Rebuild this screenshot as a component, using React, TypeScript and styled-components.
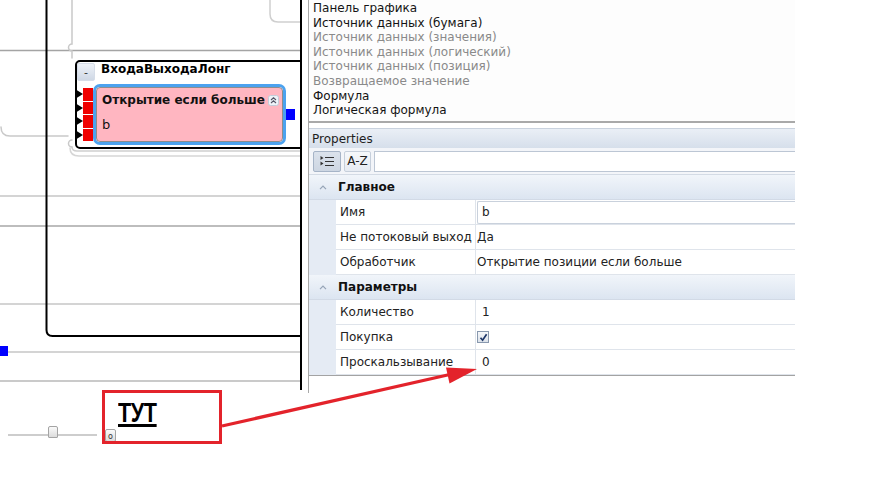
import React from "react";
import styled, { createGlobalStyle } from "styled-components";

const Global = createGlobalStyle`
  html, body { margin: 0; padding: 0; background: #fff; }
  body { font-family: "DejaVu Sans", Verdana, sans-serif; }
  * { box-sizing: border-box; }
`;

const Page = styled.div`
  position: relative;
  width: 872px;
  height: 496px;
  overflow: hidden;
  background: #fff;
  display: flex;
  flex-direction: column;
`;

const Workspace = styled.div`
  display: flex;
  height: 393px;
  flex: none;
`;

const Canvas = styled.div`
  position: relative;
  width: 302px;
  height: 390px;
  flex: none;
  border-right: 2px solid #000;
  overflow: hidden;
`;

const Wires = styled.svg`
  position: absolute;
  left: 0;
  top: 0;
`;

const Splitter = styled.div`
  width: 6px;
  flex: none;
`;

const Side = styled.div`
  width: 487px;
  flex: none;
  border-left: 1px solid #a9a9a9;
  display: flex;
  flex-direction: column;
`;

const ListBox = styled.div`
  height: 123px;
  flex: none;
  border-bottom: 2px solid #a9a9a9;
  padding: 1px 0 0 4px;
  background: #fdfdfd;
`;

const ListItem = styled.div<{ $muted?: boolean }>`
  font-size: 12px;
  line-height: 14.6px;
  white-space: nowrap;
  color: ${(p) => (p.$muted ? "#8a8a8a" : "#141414")};
`;

const Spacer = styled.div`
  height: 5px;
  flex: none;
`;

const PropsPanel = styled.div`
  display: flex;
  flex-direction: column;
  border-bottom: 1px solid #a3a3a3;
`;

const PanelHeader = styled.div`
  height: 20px;
  display: flex;
  align-items: center;
  padding-left: 3px;
  font-size: 12px;
  color: #1e1e1e;
  background: linear-gradient(#eaeff6, #d6dfeb);
  border-top: 1px solid #c9d2de;
`;

const Toolbar = styled.div`
  height: 27px;
  display: flex;
  align-items: center;
  gap: 3px;
  padding: 0 0 0 4px;
  background: #f3f5f9;
  border-bottom: 1px solid #d4dbe5;
`;

const ToolButton = styled.div<{ $pressed?: boolean }>`
  height: 21px;
  width: ${(p) => (p.$pressed ? "28px" : "27px")};
  display: flex;
  align-items: center;
  justify-content: center;
  font-size: 12px;
  color: #222;
  border: 1px solid ${(p) => (p.$pressed ? "#a6b4c7" : "#c6cfdb")};
  border-radius: 2px;
  background: ${(p) =>
    p.$pressed ? "linear-gradient(#dbe2ec, #cdd6e2)" : "linear-gradient(#f6f8fb, #e6ebf2)"};
`;

const SearchBox = styled.div`
  flex: 1;
  height: 21px;
  background: #fff;
  border: 1px solid #bcc6d4;
  border-right: none;
`;

const Grid = styled.div`
  display: flex;
  flex-direction: column;
`;

const CatRow = styled.div`
  height: 25px;
  display: flex;
  align-items: center;
  background: linear-gradient(#f1f5fa, #dce5f1);
  border-bottom: 1px solid #d2dae6;
  font-size: 12px;
  font-weight: bold;
  color: #111;
`;

const CatToggle = styled.div`
  width: 27px;
  display: flex;
  justify-content: center;
  align-items: center;
`;

const CatTitle = styled.span`
  padding-left: 2px;
`;

const PropRow = styled.div`
  height: 25px;
  display: flex;
`;

const Gutter = styled.div`
  width: 27px;
  flex: none;
  background: #e5ebf4;
`;

const NameCell = styled.div`
  width: 140px;
  flex: none;
  display: flex;
  align-items: center;
  padding-left: 4px;
  font-size: 12px;
  color: #222;
  white-space: nowrap;
  border-right: 1px solid #dfe4eb;
  border-bottom: 1px solid #dfe4eb;
`;

const ValueCell = styled.div<{ $pad: number }>`
  flex: 1;
  display: flex;
  align-items: center;
  padding-left: ${(p) => p.$pad}px;
  font-size: 12px;
  color: #222;
  white-space: nowrap;
  border-bottom: 1px solid #dfe4eb;
`;

const TextEditor = styled.div`
  flex: 1;
  height: 23px;
  display: flex;
  align-items: center;
  padding-left: 4px;
  background: #fff;
  border: 1px solid #c9d1dc;
  border-right: none;
  border-radius: 2px 0 0 2px;
`;

const CheckBox = styled.div`
  width: 12px;
  height: 12px;
  border: 1px solid #8898ae;
  background: linear-gradient(#f5f7fa, #dce2ea);
  display: flex;
  align-items: center;
  justify-content: center;
`;

/* ---------- diagram nodes ---------- */

const GroupNode = styled.div`
  position: absolute;
  left: 75px;
  top: 60px;
  width: 250px;
  height: 89px;
  border: 2px solid #000;
  border-radius: 5px;
  background: #fff;
  display: flex;
  flex-direction: column;
`;

const GroupHeader = styled.div`
  height: 22px;
  display: flex;
  align-items: flex-start;
  gap: 6px;
`;

const MinusButton = styled.div`
  width: 18px;
  height: 18px;
  margin-top: 1px;
  display: flex;
  align-items: center;
  justify-content: center;
  font-size: 11px;
  color: #333;
  background: linear-gradient(#eef2f8, #cfd8e5);
  border: 1px solid #d6dde8;
  border-radius: 2px;
`;

const GroupTitle = styled.span`
  font-size: 12px;
  font-weight: bold;
  color: #000;
  line-height: 14px;
  white-space: nowrap;
`;

const GroupBody = styled.div`
  display: flex;
  align-items: flex-start;
`;

const PinColumn = styled.div`
  margin-left: -2px;
  margin-top: 4px;
  display: flex;
  flex-direction: column;
  gap: 1px;
`;

const InPin = styled.div`
  display: flex;
  align-items: center;
  height: 12.5px;
`;

const PinArrow = styled.div`
  width: 0;
  height: 0;
  border-top: 5.5px solid transparent;
  border-bottom: 5.5px solid transparent;
  border-left: 8px solid #000;
`;

const PinSquare = styled.div`
  width: 10px;
  height: 12.5px;
  background: #f00000;
`;

const Block = styled.div`
  width: 193px;
  height: 61px;
  border: 3px solid #4ca2ef;
  border-radius: 7px;
  flex: none;
  display: flex;
`;

const BlockInner = styled.div`
  flex: 1;
  border: 1.5px solid #8d8d8d;
  border-radius: 4px;
  background: #ffb6c1;
  display: flex;
  flex-direction: column;
  padding: 4px 0 0 5px;
`;

const BlockTitleRow = styled.div`
  display: flex;
  align-items: center;
  gap: 3px;
  height: 16px;
`;

const BlockTitle = styled.span`
  font-size: 12px;
  font-weight: bold;
  color: #111;
  white-space: nowrap;
`;

const BlockValue = styled.span`
  margin-top: 9px;
  font-size: 13px;
  color: #111;
`;

const OutPin = styled.div`
  width: 9px;
  height: 11px;
  margin-top: 25px;
  background: #0000ff;
  flex: none;
`;

/* ---------- bottom bar ---------- */

const BottomBar = styled.div`
  display: flex;
  align-items: center;
  padding: 35px 0 0 8px;
  gap: 8px;
`;

const Slider = styled.div`
  position: relative;
  width: 89px;
  height: 12px;
  display: flex;
  align-items: center;
`;

const SliderTrack = styled.div`
  width: 100%;
  height: 2px;
  background: #cdcdcd;
`;

const SliderThumb = styled.div`
  position: absolute;
  left: 40px;
  top: -3px;
  width: 10px;
  height: 12px;
  border: 1px solid #a4a4a4;
  border-radius: 2px 2px 1px 1px;
  background: linear-gradient(#fafafa, #dcdcdc);
`;

const ZoomButton = styled.div`
  width: 11px;
  height: 13px;
  border: 1px solid #a4a4a4;
  border-radius: 2px;
  background: linear-gradient(#fafafa, #dcdcdc);
  font-size: 8px;
  line-height: 14px;
  text-align: center;
  color: #333;
  margin-top: 1px;
`;

/* ---------- annotation ---------- */

const Callout = styled.div`
  position: absolute;
  left: 102px;
  top: 390px;
  width: 120px;
  height: 54px;
  border: 3px solid #e3232b;
  padding: 5px 0 0 13px;
`;

const CalloutText = styled.span`
  display: inline-block;
  font-family: "Liberation Sans", Arial, sans-serif;
  font-weight: bold;
  font-size: 27px;
  line-height: 30px;
  color: #000;
  text-decoration: underline;
  text-decoration-thickness: 3px;
  text-underline-offset: 2px;
  transform: scaleX(0.8);
  transform-origin: left center;
  letter-spacing: -0.5px;
`;

const Overlay = styled.svg`
  position: absolute;
  left: 0;
  top: 0;
  pointer-events: none;
`;

const listItems: { text: string; muted?: boolean }[] = [
  { text: "Панель графика" },
  { text: "Источник данных (бумага)" },
  { text: "Источник данных (значения)", muted: true },
  { text: "Источник данных (логический)", muted: true },
  { text: "Источник данных (позиция)", muted: true },
  { text: "Возвращаемое значение", muted: true },
  { text: "Формула" },
  { text: "Логическая формула" },
];

type Row = { name: string; value?: string; kind?: "text" | "num" | "check" };
const sections: { title: string; rows: Row[] }[] = [
  {
    title: "Главное",
    rows: [
      { name: "Имя", value: "b", kind: "text" },
      { name: "Не потоковый выход", value: "Да" },
      { name: "Обработчик", value: "Открытие позиции если больше" },
    ],
  },
  {
    title: "Параметры",
    rows: [
      { name: "Количество", value: "1", kind: "num" },
      { name: "Покупка", kind: "check" },
      { name: "Проскальзывание", value: "0", kind: "num" },
    ],
  },
];

const Chevron = () => (
  <svg width="8" height="5" viewBox="0 0 8 5">
    <path d="M1 4.2 L4 1.2 L7 4.2" fill="none" stroke="#95a3b6" strokeWidth="1.2" />
  </svg>
);

const CategorizedIcon = () => (
  <svg width="15" height="11" viewBox="0 0 15 11">
    <path d="M0.5 0 L3.5 2 L0.5 4 Z" fill="#333" />
    <path d="M0.5 5.5 L3.5 7.5 L0.5 9.5 Z" fill="#333" />
    <path d="M5 1.5 H14 M5 5.5 H14 M5 9.5 H14" stroke="#333" strokeWidth="1.2" />
  </svg>
);

const CollapseIcon = () => (
  <svg width="11" height="11" viewBox="0 0 11 11">
    <rect x="0.5" y="0.5" width="10" height="10" rx="2" fill="#eef2f8" stroke="#c3ccd9" />
    <path d="M3 5 L5.5 2.8 L8 5 M3 8 L5.5 5.8 L8 8" fill="none" stroke="#556" strokeWidth="1.1" />
  </svg>
);

const CheckMark = () => (
  <svg width="9" height="9" viewBox="0 0 9 9">
    <path d="M1.5 4.8 L3.6 7.2 L7.6 1.2" fill="none" stroke="#1c3568" strokeWidth="1.7" />
  </svg>
);

function renderValue(r: Row) {
  if (r.kind === "text")
    return (
      <ValueCell $pad={1}>
        <TextEditor>{r.value}</TextEditor>
      </ValueCell>
    );
  if (r.kind === "check")
    return (
      <ValueCell $pad={1}>
        <CheckBox>
          <CheckMark />
        </CheckBox>
      </ValueCell>
    );
  if (r.kind === "num") return <ValueCell $pad={6}>{r.value}</ValueCell>;
  return <ValueCell $pad={1}>{r.value}</ValueCell>;
}

export default function App() {
  return (
    <Page>
      <Global />
      <Workspace>
        <Canvas>
          <Wires width="300" height="390" viewBox="0 0 300 390">
            <g fill="none" strokeLinecap="round">
              <path d="M0 50.5 H300" stroke="#a4a4a4" strokeWidth="1.5" />
              <path d="M72 0 V44 a3.5 3.5 0 0 0 0 7 V58" stroke="#c9c9c9" strokeWidth="1.5" />
              <path d="M270 0 V14 Q270 22 278 22 H300" stroke="#cfcfcf" strokeWidth="1.5" />
              <path d="M1 127 Q1 136 10 136 H68" stroke="#c9c9c9" strokeWidth="1.5" />
              <path d="M72 140 a3.5 3.5 0 0 0 0 7" stroke="#c9c9c9" strokeWidth="1.5" />
              <path d="M72 147 Q72 151 77 151 H300" stroke="#cfcfcf" strokeWidth="1.5" />
              <path d="M70 148 Q70 156 79 156 H300" stroke="#d6d6d6" strokeWidth="1.5" />
              <path d="M296 115 H300" stroke="#bcbcbc" strokeWidth="1.5" />
              <path d="M0 196 H300" stroke="#c6c6c6" strokeWidth="1.5" />
              <path d="M0 226 H300" stroke="#bdbdbd" strokeWidth="2" />
              <path d="M0 304 H300" stroke="#c6c6c6" strokeWidth="1.5" />
              <path d="M8 352 H300" stroke="#d4d4d4" strokeWidth="2" />
              <path d="M0 381 H300" stroke="#b8b8b8" strokeWidth="1.5" />
              <path d="M46.5 0 V330 Q46.5 336 52.5 336 H300" stroke="#000" strokeWidth="2" />
            </g>
            <rect x="0" y="346" width="8" height="10" fill="#0000ff" />
          </Wires>

          <GroupNode>
            <GroupHeader>
              <MinusButton>-</MinusButton>
              <GroupTitle>ВходаВыходаЛонг</GroupTitle>
            </GroupHeader>
            <GroupBody>
              <PinColumn>
                {[0, 1, 2, 3].map((i) => (
                  <InPin key={i}>
                    <PinArrow />
                    <PinSquare />
                  </InPin>
                ))}
              </PinColumn>
              <Block>
                <BlockInner>
                  <BlockTitleRow>
                    <BlockTitle>Открытие если больше</BlockTitle>
                    <CollapseIcon />
                  </BlockTitleRow>
                  <BlockValue>b</BlockValue>
                </BlockInner>
              </Block>
              <OutPin />
            </GroupBody>
          </GroupNode>
        </Canvas>

        <Splitter />

        <Side>
          <ListBox>
            {listItems.map((it) => (
              <ListItem key={it.text} $muted={it.muted}>
                {it.text}
              </ListItem>
            ))}
          </ListBox>
          <Spacer />
          <PropsPanel>
            <PanelHeader>Properties</PanelHeader>
            <Toolbar>
              <ToolButton $pressed>
                <CategorizedIcon />
              </ToolButton>
              <ToolButton>A-Z</ToolButton>
              <SearchBox />
            </Toolbar>
            <Grid>
              {sections.map((s) => (
                <React.Fragment key={s.title}>
                  <CatRow>
                    <CatToggle>
                      <Chevron />
                    </CatToggle>
                    <CatTitle>{s.title}</CatTitle>
                  </CatRow>
                  {s.rows.map((r) => (
                    <PropRow key={r.name}>
                      <Gutter />
                      <NameCell>{r.name}</NameCell>
                      {renderValue(r)}
                    </PropRow>
                  ))}
                </React.Fragment>
              ))}
            </Grid>
          </PropsPanel>
        </Side>
      </Workspace>

      <BottomBar>
        <Slider>
          <SliderTrack />
          <SliderThumb />
        </Slider>
        <ZoomButton>o</ZoomButton>
      </BottomBar>

      <Callout>
        <CalloutText>ТУТ</CalloutText>
      </Callout>

      <Overlay width="872" height="496" viewBox="0 0 872 496">
        <path d="M222 426 L452 374" stroke="#e3232b" strokeWidth="3.2" fill="none" />
        <polygon points="477,369 446,367.5 449.5,383.5" fill="#e3232b" />
      </Overlay>
    </Page>
  );
}
